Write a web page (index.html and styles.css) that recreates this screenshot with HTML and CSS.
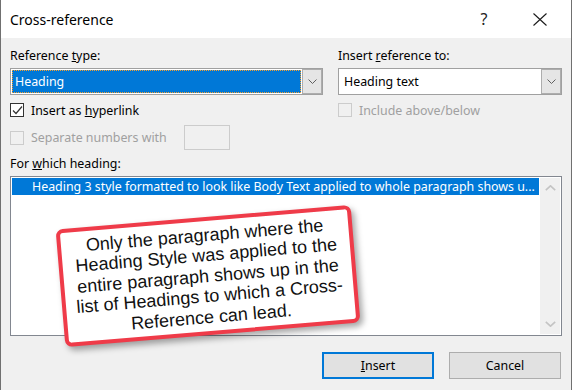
FILE: index.html
```html
<!DOCTYPE html>
<html>
<head>
<meta charset="utf-8">
<link rel="stylesheet" href="styles.css">
</head>
<body>
<div class="window">
  <div class="titlebar">
    <span class="title">Cross-reference</span>
    <span class="help">?</span>
    <span class="close"><svg width="14" height="13" viewBox="0 0 14 13"><path d="M0.5 0.5 L13.5 12.5 M13.5 0.5 L0.5 12.5" stroke="#1a1a1a" stroke-width="1.1" fill="none"/></svg></span>
  </div>
  <div class="body">
    <div class="top">
      <div class="col">
        <div class="label">Reference <u>t</u>ype:</div>
        <div class="combo">
          <div class="field"><span class="sel">Heading</span></div>
          <div class="drop"><svg width="9" height="5" viewBox="0 0 9 5"><polyline points="0.5,0.5 4.5,4.5 8.5,0.5" stroke="#606060" stroke-width="1" fill="none"/></svg></div>
        </div>
        <div class="check">
          <span class="box"><svg width="12" height="12" viewBox="0 0 12 12"><polyline points="2,6.5 5,9.5 11,2.5" stroke="#333" stroke-width="1.2" fill="none"/></svg></span>
          <span>Insert as <u>h</u>yperlink</span>
        </div>
        <div class="sep-row">
          <div class="check inline disabled"><span class="box"></span><span>Separate numbers with</span></div>
          <span class="textbox"></span>
        </div>
      </div>
      <div class="col">
        <div class="label">Insert <u>r</u>eference to:</div>
        <div class="combo">
          <div class="field"><span class="value">Heading text</span></div>
          <div class="drop"><svg width="9" height="5" viewBox="0 0 9 5"><polyline points="0.5,0.5 4.5,4.5 8.5,0.5" stroke="#606060" stroke-width="1" fill="none"/></svg></div>
        </div>
        <div class="check disabled"><span class="box"></span><span>Include above/below</span></div>
      </div>
    </div>
    <div class="label label-list">For <u>w</u>hich heading:</div>
    <div class="list">
      <div class="items">
        <div class="item selected">Heading 3 style formatted to look like Body Text applied to whole paragraph shows u...</div>
      </div>
      <div class="scrollbar">
        <span class="arrow"><svg width="11" height="6" viewBox="0 0 11 6"><polyline points="0.8,5.2 5.5,0.8 10.2,5.2" stroke="#c4c4c4" stroke-width="1.6" fill="none"/></svg></span>
        <span class="arrow"><svg width="11" height="6" viewBox="0 0 11 6"><polyline points="0.8,0.8 5.5,5.2 10.2,0.8" stroke="#c4c4c4" stroke-width="1.6" fill="none"/></svg></span>
      </div>
    </div>
    <div class="buttons">
      <button class="btn default"><u>I</u>nsert</button>
      <button class="btn">Cancel</button>
    </div>
  </div>
  <div class="callout">
    <p>Only the paragraph where the<br>Heading Style was applied to the<br>entire paragraph shows up in the<br>list of Headings to which a Cross-<br>Reference can lead.</p>
  </div>
</div>
</body>
</html>
```
FILE: styles.css
```css
body {
  margin: 0;
  background: #f0f0f0;
}

.window {
  position: relative;
  width: 572px;
  height: 390px;
  box-sizing: border-box;
  border-left: 1px solid #707070;
  border-right: 1px solid #707070;
  background: #f0f0f0;
  font-family: "Noto Sans", "Open Sans", sans-serif;
  font-size: 12.4px;
  color: #000;
  overflow: hidden;
}

.titlebar {
  height: 38px;
  background: #fff;
  display: flex;
  align-items: center;
  padding: 0 16px 0 9px;
}

.title {
  flex: 1;
  font-size: 14px;
  color: #000;
}

.help {
  width: 30px;
  text-align: center;
  font-size: 16px;
  color: #222;
}

.close {
  width: 30px;
  margin-left: 26px;
  display: flex;
  justify-content: center;
}

.body {
  padding: 10px 9px 0 9px;
}

.top {
  display: grid;
  grid-template-columns: 313px 224px;
  column-gap: 15px;
}

.label {
  height: 16px;
  line-height: 16px;
  white-space: nowrap;
}

.combo {
  margin-top: 4px;
  height: 27px;
  box-sizing: border-box;
  border: 1px solid #a0a0a0;
  background: #fff;
  display: flex;
}

.field {
  flex: 1;
  padding: 1px;
  display: flex;
  min-width: 0;
}

.sel {
  flex: 1;
  background: #0078d7;
  color: #fff;
  outline: 1px dotted #f5a030;
  outline-offset: -1px;
  padding-left: 3px;
  line-height: 23px;
}

.value {
  padding-left: 4px;
  line-height: 23px;
  color: #000;
}

.drop {
  width: 20px;
  box-sizing: border-box;
  border: 1px solid #adadad;
  background: #e5e5e5;
  display: flex;
  align-items: center;
  justify-content: center;
}

.drop svg {
  display: block;
}

.check {
  display: flex;
  align-items: center;
  gap: 7px;
  height: 16px;
  margin-top: 7px;
  white-space: nowrap;
}

.check.inline {
  margin-top: 0;
}

.box {
  width: 14px;
  height: 14px;
  box-sizing: border-box;
  border: 1px solid #333;
  background: #fff;
  display: flex;
  align-items: center;
  justify-content: center;
}

.box svg {
  display: block;
}

.disabled {
  color: #a0a0a0;
}

.disabled .box {
  border-color: #cccccc;
  background: transparent;
}

.sep-row {
  display: grid;
  grid-template-columns: 174px 46px;
  align-items: center;
  height: 25px;
  margin-top: 7px;
}

.textbox {
  height: 25px;
  box-sizing: border-box;
  border: 1px solid #cccccc;
  background: #f0f0f0;
}

.label-list {
  margin-top: 6px;
}

.list {
  margin-top: 4px;
  height: 160px;
  box-sizing: border-box;
  border: 1px solid #828790;
  background: #fff;
  padding: 1px;
  display: flex;
}

.items {
  flex: 1;
  min-width: 0;
  padding-right: 1px;
}

.item {
  height: 17px;
  line-height: 17px;
  padding-left: 20px;
  white-space: nowrap;
  overflow: hidden;
}

.item.selected {
  background: #0078d7;
  color: #fff;
}

.scrollbar {
  width: 20px;
  background: #f0f0f0;
  display: flex;
  flex-direction: column;
  justify-content: space-between;
}

.arrow {
  height: 20px;
  display: flex;
  align-items: center;
  justify-content: center;
}

.arrow svg {
  display: block;
}

.buttons {
  display: flex;
  justify-content: flex-end;
  gap: 15px;
  margin-top: 16px;
  padding-right: 1px;
}

.btn {
  width: 112px;
  height: 27px;
  box-sizing: border-box;
  border: 1px solid #adadad;
  background: #e1e1e1;
  font: inherit;
  color: #000;
  padding: 0;
}

.btn.default {
  border: 2px solid #0078d7;
}

.callout {
  position: absolute;
  left: 58.5px;
  top: 216.75px;
  width: 296px;
  height: 118px;
  box-sizing: border-box;
  border: 4px solid #ef3b49;
  border-radius: 7px;
  background: #fff;
  transform: rotate(-4.8deg);
  box-shadow: 3px 4px 6px rgba(0, 0, 0, 0.35);
  font-family: "Liberation Sans", Arial, sans-serif;
  font-size: 18px;
  line-height: 20.5px;
  text-align: center;
  color: #111;
  display: flex;
  align-items: center;
  justify-content: center;
}

.callout p {
  margin: 0;
  white-space: nowrap;
}
```
